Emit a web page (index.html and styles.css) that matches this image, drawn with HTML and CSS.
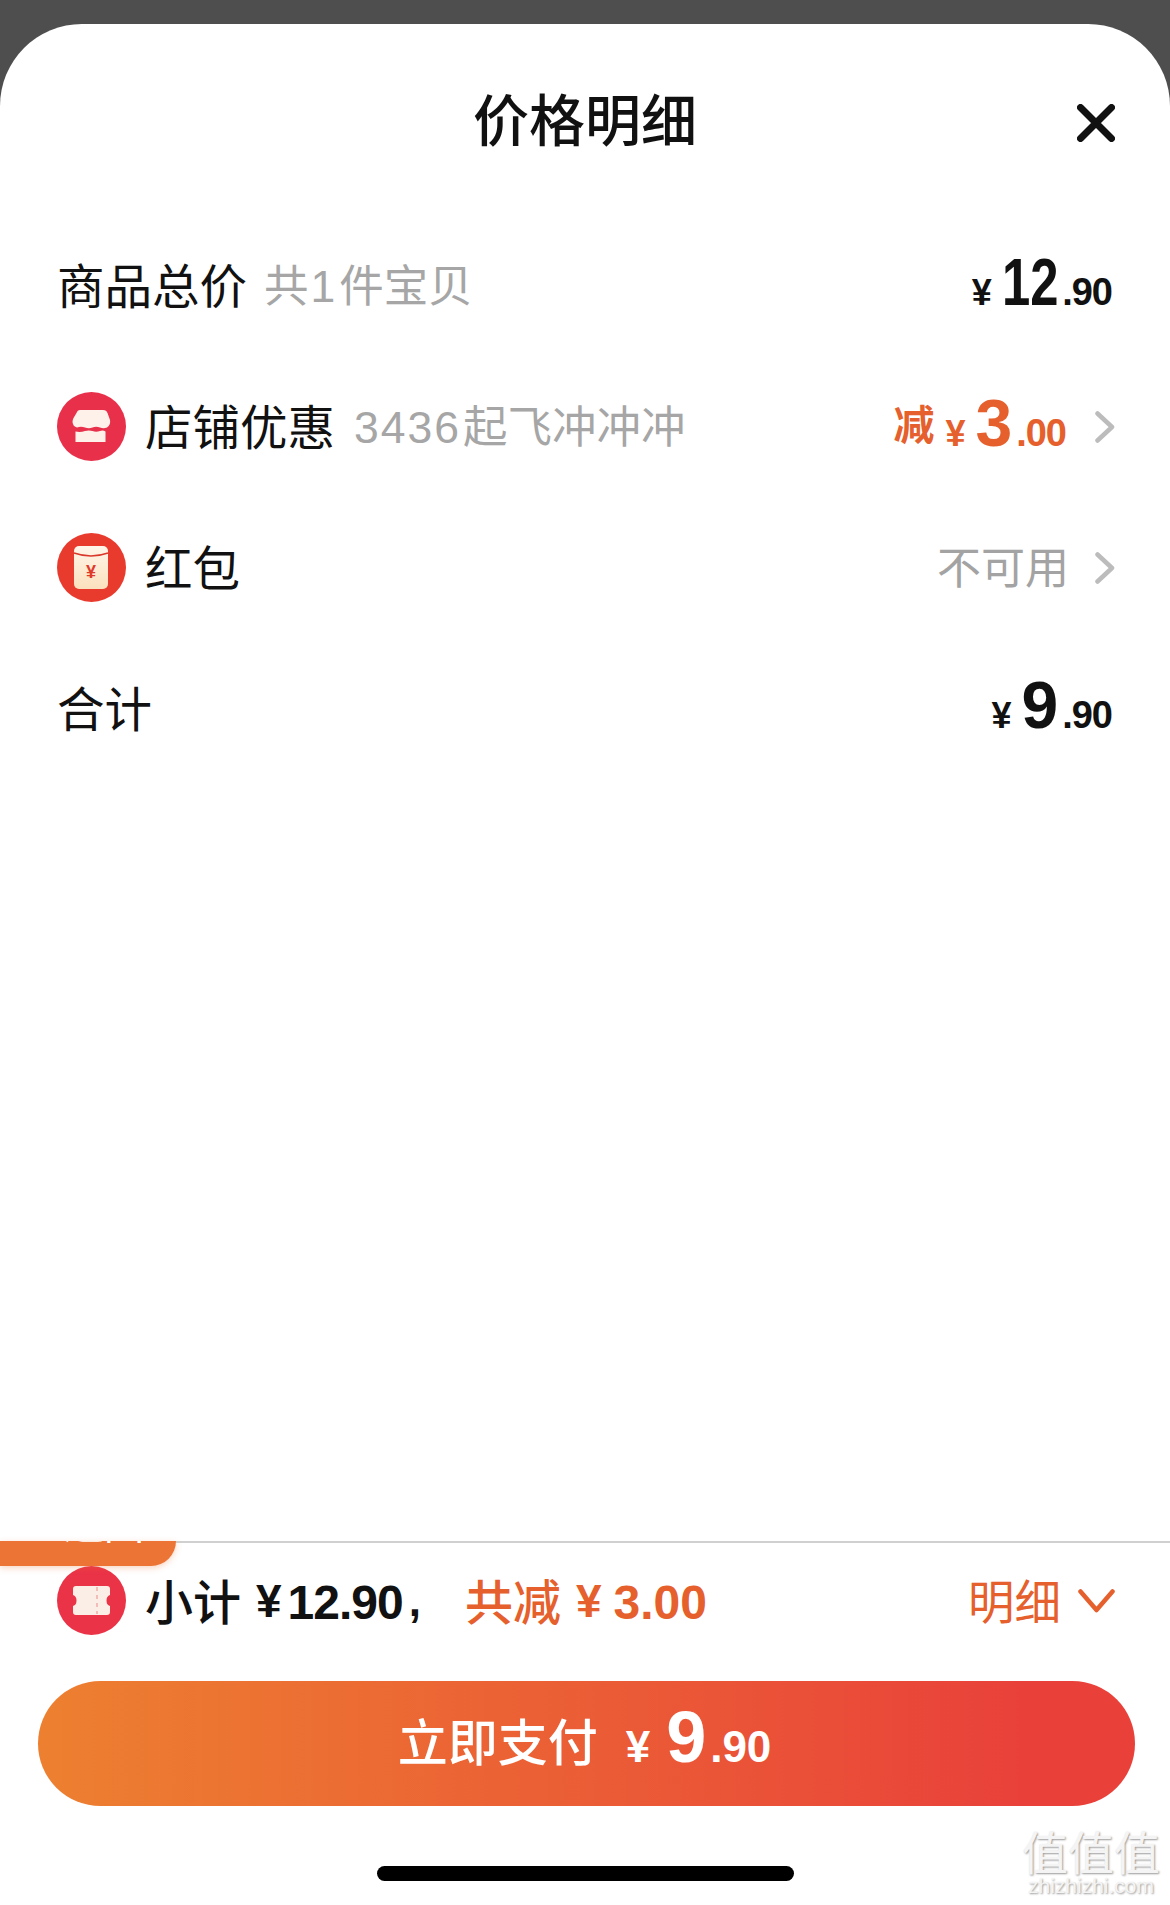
FILE: index.html
```html
<!DOCTYPE html>
<html lang="zh-CN">
<head>
  <meta charset="UTF-8" />
  <title>价格明细</title>
  <link rel="stylesheet" href="styles.css">
</head>
<body>
  <div class="sheet">
    <div class="header">
      <h1 class="title">价格明细</h1>
      <svg class="close" width="38" height="38" viewBox="0 0 38 38">
        <path d="M3.500 3.500 L34.500 34.500 M34.500 3.500 L3.500 34.500" fill="none" stroke="#111" stroke-width="7" stroke-linecap="round" />
      </svg>
    </div>

    <div class="row">
      <span class="label">商品总价</span>
      <span class="sub">共<span class="sub-num">1</span>件宝贝</span>
      <div class="amount">
        <span class="yen">¥</span><span class="big squeeze">12</span><span class="cents">.90</span>
      </div>
    </div>

    <div class="row">
      <svg class="badge" width="69" height="69" viewBox="0 0 69 69">
        <circle cx="34.500" cy="34.500" r="34.500" fill="#e8304a" />
        <path d="M23 18 H46 Q49.500 18 50.500 21 L53 28 Q54 33 50 35.500 Q46.500 37 43 35.500 Q39 34 35.500 35.500 Q32 37 28 35.500 Q24 34 20 35.500 Q16 34.500 15.500 30 Q15.500 28 16.500 26 L19.500 21 Q20.500 18 23 18 Z" fill="#fdf1ea" />
        <path d="M18.500 39.500 Q23.500 40.500 28 39 Q32 38 35.500 39 Q39 40.500 43 39 Q46 38 48.500 39.500 V50 H18.500 Z" fill="#fdf1ea" />
      </svg>
      <span class="label">店铺优惠</span>
      <span class="sub"><span class="sub-num">3436</span>起飞冲冲冲</span>
      <div class="amount orange">
        <span class="minus">减</span><span class="yen">¥</span><span class="big">3</span><span class="cents">.00</span>
      </div>
      <svg class="chevron" width="20" height="32" viewBox="0 0 20 32">
        <path d="M2.500 2.500 L17 16 L2.500 29.500" fill="none" stroke="#bcbcbc" stroke-width="4.500" stroke-linecap="round" stroke-linejoin="round" />
      </svg>
    </div>

    <div class="row">
      <svg class="badge" width="69" height="69" viewBox="0 0 69 69">
        <defs>
          <linearGradient id="packet" x1="0" y1="0" x2="0" y2="1">
            <stop offset="0" stop-color="#fff6ea" />
            <stop offset="1" stop-color="#fbe0bd" />
          </linearGradient>
        </defs>
        <circle cx="34.500" cy="34.500" r="34.500" fill="#e93b2d" />
        <rect x="17" y="13" width="34" height="43" rx="5" fill="url(#packet)" />
        <path d="M17 20 Q34 26 51 20" fill="none" stroke="#d9392c" stroke-width="1.500" />
        <text class="packet-yen" x="34" y="45" text-anchor="middle">¥</text>
      </svg>
      <span class="label">红包</span>
      <div class="amount">
        <span class="unavailable">不可用</span>
      </div>
      <svg class="chevron" width="20" height="32" viewBox="0 0 20 32">
        <path d="M2.500 2.500 L17 16 L2.500 29.500" fill="none" stroke="#bcbcbc" stroke-width="4.500" stroke-linecap="round" stroke-linejoin="round" />
      </svg>
    </div>

    <div class="row">
      <span class="label">合计</span>
      <div class="amount">
        <span class="yen">¥</span><span class="big">9</span><span class="cents">.90</span>
      </div>
    </div>

    <div class="footer">
      <div class="tab"><span class="tab-text">返回</span></div>
      <div class="summary">
        <svg class="badge" width="69" height="69" viewBox="0 0 69 69">
          <circle cx="34.500" cy="34.500" r="34.500" fill="#ea3347" />
          <path d="M19 20 H50 Q53 20 53 23 V29 Q49.500 30 49.500 34.500 Q49.500 39 53 40 V46 Q53 49 50 49 H19 Q16 49 16 46 V40 Q19.500 39 19.500 34.500 Q19.500 30 16 29 V23 Q16 20 19 20 Z" fill="#fbeee6" />
          <path d="M40 21 V48" stroke="#f2bdb6" stroke-width="2" stroke-dasharray="4 4" />
        </svg>
        <span class="sum-label">小计</span>
        <span class="sum-yen">¥</span><span class="sum-num">12.90</span><span class="sum-comma">,</span>
        <span class="sum-label off">共减</span>
        <span class="sum-yen off-color">¥</span><span class="sum-num off-num">3.00</span>
        <span class="detail">明细</span>
        <svg class="chevron-down" width="37" height="24" viewBox="0 0 37 24">
          <path d="M2.500 2.500 L18.500 21 L34.500 2.500" fill="none" stroke="#e5602c" stroke-width="4.500" stroke-linecap="round" stroke-linejoin="round" />
        </svg>
      </div>
      <button class="pay">
        <span class="pay-label">立即支付</span><span class="pay-yen">¥</span><span class="pay-big">9</span><span class="pay-cents">.90</span>
      </button>
      <div class="home-bar"></div>
    </div>

    <div class="watermark">
      <span class="wm-mark">值值值</span>
      <span class="wm-site">zhizhizhi.com</span>
    </div>
  </div>
</body>
</html>
```

FILE: styles.css
```css
html, body {
  margin: 0;
  height: 1905px;
  overflow: hidden;
}

body {
  background-color: #4e4e4e;
  font-family: "Noto Sans CJK SC", "Liberation Sans", sans-serif;
  color: #111;
}

.sheet {
  position: relative;
  margin-top: 24px;
  height: 1881px;
  background-color: #fff;
  border-radius: 82px 82px 0 0;
  display: flex;
  flex-direction: column;
  overflow: hidden;
}

.header {
  display: grid;
  grid-template-columns: 1fr auto 1fr;
  align-items: center;
  padding: 64px 55px 61px 0;
  height: 66px;
}

.title {
  grid-column: 2;
  align-self: start;
  margin: 0;
  font-size: 56px;
  line-height: 58px;
  font-weight: 500;
  padding-left: 55px;
}

.close {
  grid-column: 3;
  justify-self: end;
  margin-top: 3px;
}

.row {
  display: flex;
  align-items: center;
  height: 141px;
  padding: 0 55px 0 57px;
}

.badge {
  flex: 0 0 auto;
  margin-right: 19px;
}

.packet-yen {
  font-family: "Liberation Sans", sans-serif;
  font-size: 18px;
  font-weight: bold;
  fill: #e0392c;
}

.label {
  font-size: 47.500px;
  line-height: 60px;
  padding-bottom: 4px;
}

.sub {
  margin-left: 17px;
  font-size: 44.500px;
  line-height: 60px;
  padding-bottom: 2px;
  color: #a6a6a6;
}

.sub-num {
  font-family: "Liberation Sans", sans-serif;
  letter-spacing: 2px;
  margin: 0 2px;
}

.amount {
  margin-left: auto;
  padding: 10px 3px 0 0;
  line-height: 70px;
  white-space: nowrap;
  font-family: "Liberation Sans", sans-serif;
  font-weight: bold;
  color: #111;
}

.yen {
  font-size: 36px;
  margin-right: 10px;
}

.big {
  font-size: 66px;
}

/* this one is narrower in the reference than the font's digits */
.squeeze {
  display: inline-block;
  margin-left: -17px;
  transform: scaleX(0.77);
  transform-origin: right center;
}

.cents {
  font-size: 38px;
  margin-left: 4px;
  letter-spacing: -1px;
}

.orange {
  color: #e5602c;
}

.minus {
  font-family: "Noto Sans CJK SC", sans-serif;
  font-size: 41px;
  margin-right: 11px;
  vertical-align: 6px;
}

.unavailable {
  font-family: "Noto Sans CJK SC", sans-serif;
  font-weight: 400;
  font-size: 44px;
  color: #a3a3a3;
  margin-right: -3px;
  vertical-align: 2px;
}

.chevron {
  margin-left: 26px;
}

.footer {
  margin-top: auto;
  position: relative;
  border-top: 2px solid #d0d0d0;
}

.tab {
  position: absolute;
  left: 0;
  top: -2px;
  width: 176px;
  height: 25px;
  background-color: #ec7535;
  border-radius: 0 0 36px 0;
  box-shadow: 0 2px 6px rgba(236, 117, 53, 0.3);
  overflow: hidden;
  text-align: center;
}

.tab-text {
  display: block;
  margin-top: -44px;
  padding-left: 32px;
  font-size: 40px;
  line-height: 50px;
  color: #fff;
}

.summary {
  display: flex;
  align-items: center;
  height: 115px;
  padding: 0 55px 0 57px;
}

.sum-label {
  font-size: 48px;
  font-weight: 500;
  padding-bottom: 4px;
}

.off {
  margin-left: 44px;
  color: #e5602c;
}

.sum-yen {
  margin-left: 15px;
  font-family: "Liberation Sans", sans-serif;
  font-size: 46px;
  font-weight: bold;
}

.sum-num {
  margin-left: 6px;
  padding-top: 4px;
  font-family: "Liberation Sans", sans-serif;
  font-size: 48px;
  font-weight: bold;
  letter-spacing: -1px;
}

.off-num {
  margin-left: 12px;
  letter-spacing: 0;
  color: #e5602c;
}

.sum-comma {
  font-family: "Liberation Sans", sans-serif;
  font-size: 44px;
  font-weight: bold;
  margin-left: 6px;
}

.off-color {
  color: #e5602c;
}

.detail {
  margin-left: auto;
  padding-bottom: 4px;
  font-size: 46.500px;
  color: #e5602c;
}

.chevron-down {
  margin-left: 17px;
}

.pay {
  display: block;
  box-sizing: border-box;
  width: 1097px;
  height: 125px;
  margin: 23px 0 0 38px;
  padding: 0 4px 12px 0;
  border: none;
  border-radius: 63px;
  background: linear-gradient(90deg, #ed8030 0%, #e9413a 90%);
  color: #fff;
  font-family: "Liberation Sans", sans-serif;
  font-weight: bold;
}

.pay-label {
  font-family: "Noto Sans CJK SC", sans-serif;
  font-size: 50px;
  font-weight: 500;
  vertical-align: 1px;
}

.pay-yen {
  margin-left: 28px;
  font-size: 44px;
}

.pay-big {
  margin-left: 16px;
  font-size: 72px;
  line-height: 72px;
}

.pay-cents {
  margin-left: 4px;
  font-size: 44px;
}

.home-bar {
  width: 417px;
  height: 15px;
  margin: 60px 0 24px 377px;
  background-color: #000;
  border-radius: 8px;
}

.watermark {
  position: absolute;
  right: 8px;
  bottom: 8px;
  width: 142px;
  display: flex;
  flex-direction: column;
  align-items: center;
  color: #f4f4f4;
  text-shadow: 1px 1px 2px #9a9a9a;
}

.wm-mark {
  font-size: 46px;
  line-height: 50px;
  white-space: nowrap;
}

.wm-site {
  font-family: "Liberation Sans", sans-serif;
  font-size: 21px;
  line-height: 22px;
}
```
